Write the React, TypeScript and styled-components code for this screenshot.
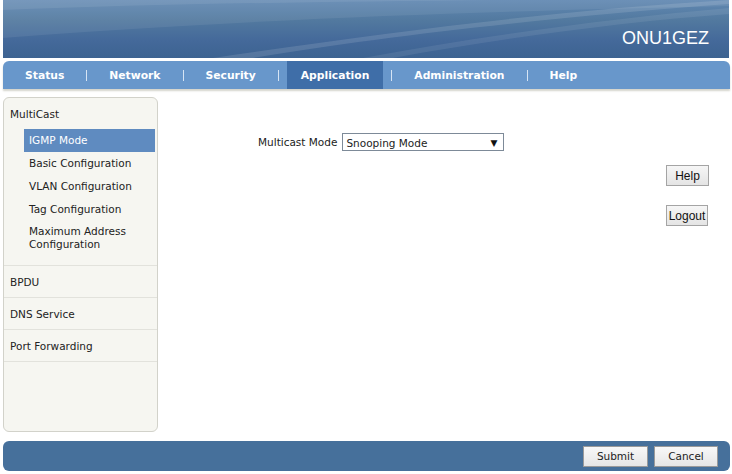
import React from "react";
import styled, { createGlobalStyle } from "styled-components";

const Global = createGlobalStyle`
  html, body { margin: 0; padding: 0; background: #ffffff; }
  body { font-family: "DejaVu Sans", Verdana, sans-serif; font-size: 10.5px; color: #2a2a2a; }
  * { box-sizing: border-box; }
`;

const Page = styled.div`
  width: 732px;
  height: 474px;
  padding: 0 2px 3px 3px;
  display: flex;
  flex-direction: column;
`;

const Header = styled.div`
  position: relative;
  height: 58px;
  margin-right: 1px;
  overflow: hidden;
  background: linear-gradient(180deg, #6188b2 0%, #52799f 35%, #44699a 70%, #3d6391 100%);
  display: flex;
  align-items: center;
  justify-content: flex-end;
  padding-right: 20px;
`;

const Swoosh = styled.svg`
  position: absolute;
  left: 0;
  top: 0;
`;

const Brand = styled.div`
  position: relative;
  font-family: "Liberation Sans", Arial, sans-serif;
  font-size: 18px;
  color: #ffffff;
  margin-top: 18px;
`;

const Nav = styled.div`
  margin-top: 3px;
  height: 28px;
  background: #6897cb;
  border-radius: 6px 6px 0 0;
  display: flex;
  align-items: stretch;
  padding-left: 8px;
  box-shadow: 0 2px 2px #d4d4cc;
`;

const NavItem = styled.div<{ $active?: boolean }>`
  display: flex;
  align-items: center;
  padding: 0 14px;
  font-weight: bold;
  font-size: 10.75px;
  color: #ffffff;
  background: ${(p) => (p.$active ? "#3f6ea8" : "transparent")};
`;

const NavSep = styled.div`
  width: 17px;
  display: flex;
  align-items: center;
  justify-content: center;
  &::before {
    content: "";
    width: 1px;
    height: 11px;
    background: #d6e4f4;
  }
`;

const Body = styled.div`
  flex: 1;
  display: flex;
  margin-top: 8px;
  min-height: 0;
`;

const Sidebar = styled.div`
  width: 155px;
  height: 335px;
  border: 1px solid #d2d2ca;
  border-radius: 6px;
  background: #f6f6f1;
  display: flex;
  flex-direction: column;
`;

const Group = styled.div<{ $pad?: number }>`
  border-bottom: 1px solid #e2e2dc;
  padding-bottom: ${(p) => p.$pad ?? 0}px;
`;

const GroupTitle = styled.div`
  height: 31px;
  display: flex;
  align-items: center;
  padding-left: 6px;
  color: #222;
`;

const SubList = styled.div`
  margin: 0 2px 0 20px;
  display: flex;
  flex-direction: column;
`;

const SubItem = styled.div<{ $active?: boolean; $tall?: boolean }>`
  min-height: 23px;
  padding: ${(p) => (p.$tall ? "4px 5px" : "0 5px")};
  display: flex;
  align-items: center;
  line-height: 13px;
  color: ${(p) => (p.$active ? "#ffffff" : "#222")};
  background: ${(p) => (p.$active ? "#5f8bc0" : "transparent")};
`;

const Content = styled.div`
  flex: 1;
  padding: 36px 0 0 100px;
`;

const FormRow = styled.div`
  display: flex;
  align-items: center;
  gap: 5px;
`;

const Label = styled.span`
  color: #222;
`;

const Select = styled.div`
  width: 162px;
  height: 18px;
  border: 1px solid #7d8a98;
  background: #fff;
  display: flex;
  align-items: center;
  justify-content: space-between;
  padding: 1px 6px 0 3px;
  color: #222;
`;

const Arrow = styled.span`
  font-size: 9px;
  color: #111;
`;

const Side = styled.div`
  width: 64px;
  padding-top: 68px;
  display: flex;
  flex-direction: column;
  align-items: flex-start;
  gap: 19px;
`;

const SysButton = styled.button<{ $w: number }>`
  width: ${(p) => p.$w}px;
  height: 21px;
  font-family: "Liberation Sans", Arial, sans-serif;
  font-size: 12px;
  color: #111;
  border: 1px solid #a4a4a4;
  background: linear-gradient(180deg, #f6f6f6 0%, #e4e4e4 100%);
  padding: 0;
`;

const Footer = styled.div`
  height: 30px;
  background: #46709b;
  border-radius: 6px;
  display: flex;
  align-items: center;
  justify-content: flex-end;
  gap: 6px;
  padding-right: 12px;
`;

const FootButton = styled.button<{ $w: number }>`
  width: ${(p) => p.$w}px;
  height: 21px;
  font-family: "DejaVu Sans", Verdana, sans-serif;
  font-size: 10.5px;
  color: #222;
  border: 1px solid #9a9a9a;
  background: linear-gradient(180deg, #f8f8f8 0%, #e6e6e6 100%);
  padding: 0;
`;

const navItems = ["Status", "Network", "Security", "Application", "Administration", "Help"];

export default function App() {
  return (
    <>
      <Global />
      <Page>
        <Header>
          <Swoosh width="727" height="58" viewBox="0 0 727 58">
            <path d="M0 0 H727 V6 C560 10 380 14 180 26 C110 30 50 34 0 38 Z" fill="#ffffff" opacity="0.07" />
            <path d="M250 58 C380 36 560 16 727 4 V0 C560 10 400 30 210 58 Z" fill="#ffffff" opacity="0.12" />
            <path d="M390 58 C500 38 620 22 727 14 V8 C610 18 480 36 360 58 Z" fill="#ffffff" opacity="0.08" />
            <path d="M0 10 C150 4 300 2 500 0 H0 Z" fill="#ffffff" opacity="0.08" />
          </Swoosh>
          <Brand>ONU1GEZ</Brand>
        </Header>
        <Nav>
          {navItems.map((n, i) => (
            <React.Fragment key={n}>
              {i > 0 && <NavSep />}
              <NavItem $active={n === "Application"}>{n}</NavItem>
            </React.Fragment>
          ))}
        </Nav>
        <Body>
          <Sidebar>
            <Group $pad={10}>
              <GroupTitle>MultiCast</GroupTitle>
              <SubList>
                <SubItem $active>IGMP Mode</SubItem>
                <SubItem>Basic Configuration</SubItem>
                <SubItem>VLAN Configuration</SubItem>
                <SubItem>Tag Configuration</SubItem>
                <SubItem $tall>Maximum Address<br />Configuration</SubItem>
              </SubList>
            </Group>
            <Group>
              <GroupTitle>BPDU</GroupTitle>
            </Group>
            <Group>
              <GroupTitle>DNS Service</GroupTitle>
            </Group>
            <Group>
              <GroupTitle>Port Forwarding</GroupTitle>
            </Group>
          </Sidebar>
          <Content>
            <FormRow>
              <Label>Multicast Mode</Label>
              <Select>
                <span>Snooping Mode</span>
                <Arrow>▼</Arrow>
              </Select>
            </FormRow>
          </Content>
          <Side>
            <SysButton $w={43}>Help</SysButton>
            <SysButton $w={42}>Logout</SysButton>
          </Side>
        </Body>
        <Footer>
          <FootButton $w={65}>Submit</FootButton>
          <FootButton $w={64}>Cancel</FootButton>
        </Footer>
      </Page>
    </>
  );
}
